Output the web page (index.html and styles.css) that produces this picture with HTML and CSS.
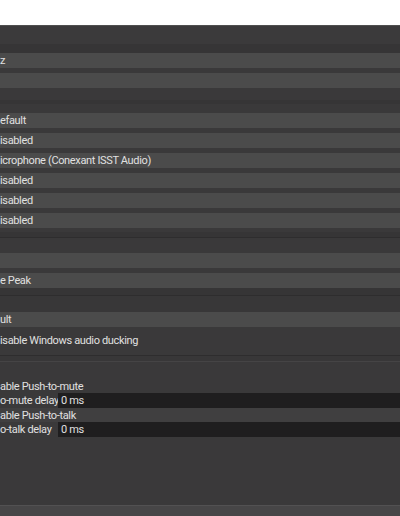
FILE: index.html
```html
<!DOCTYPE html>
<html>
<head>
<meta charset="utf-8">
<link rel="stylesheet" href="styles.css">
</head>
<body>
<div class="top"></div>
<div class="dialog">
  <div class="sp h18 bgA"></div>
  <div class="sp h9 bgB"></div>
  <div class="combo">z</div>
  <div class="sp h5"></div>
  <div class="combo"></div>
  <div class="sp h12"></div>
  <div class="sp h4 bgB"></div>
  <div class="sp h9"></div>
  <div class="combo">efault</div>
  <div class="sp h5"></div>
  <div class="combo">isabled</div>
  <div class="sp h5"></div>
  <div class="combo">icrophone (Conexant ISST Audio)</div>
  <div class="sp h5"></div>
  <div class="combo">isabled</div>
  <div class="sp h5"></div>
  <div class="combo">isabled</div>
  <div class="sp h5"></div>
  <div class="combo">isabled</div>
  <div class="sp h4"></div>
  <div class="sp h5 bgB"></div>
  <div class="line dark"></div>
  <div class="sp h15"></div>
  <div class="combo"></div>
  <div class="sp h5"></div>
  <div class="combo">e Peak</div>
  <div class="sp h7 bgB"></div>
  <div class="line dark"></div>
  <div class="sp h16 bgC"></div>
  <div class="combo">ult</div>
  <div class="sp h6"></div>
  <div class="row">isable Windows audio ducking</div>
  <div class="sp h8"></div>
  <div class="line dark"></div>
  <div class="sp h5 bgC"></div>
  <div class="line light"></div>
  <div class="sp h17"></div>
  <div class="row">able Push-to-mute</div>
  <div class="field"><span class="lbl">o-mute delay</span><span class="input">0 ms</span></div>
  <div class="row hl">able Push-to-talk</div>
  <div class="field"><span class="lbl">o-talk delay</span><span class="input">0 ms</span></div>
  <div class="fill"></div>
  <div class="bottom"></div>
</div>
</body>
</html>
```
FILE: styles.css
```css
html, body {
  margin: 0;
  padding: 0;
  background: #ffffff;
}
body {
  width: 400px;
  height: 516px;
  overflow: hidden;
  font-family: Roboto, "Open Sans", sans-serif;
  font-size: 11px;
  letter-spacing: -0.35px;
  color: #e0e0e0;
}
.top {
  height: 25px;
  background: #ffffff;
}
.dialog {
  height: 491px;
  background: #3a393a;
  border-top: 1px solid #4f4f4f;
  box-sizing: border-box;
  display: flex;
  flex-direction: column;
}
.sp { flex: none; }
.h4 { height: 4px; }
.h5 { height: 5px; }
.h6 { height: 6px; }
.h7 { height: 7px; }
.h8 { height: 8px; }
.h9 { height: 9px; }
.h12 { height: 12px; }
.h15 { height: 15px; }
.h16 { height: 16px; }
.h17 { height: 17px; }
.h18 { height: 18px; }
.bgA { background: #3b3a3b; }
.bgB { background: #363536; }
.bgC { background: #383738; }
.line { flex: none; height: 1px; }
.line.dark { background: #2e2d2e; }
.line.light { background: #454445; }
.combo {
  flex: none;
  height: 15px;
  line-height: 15px;
  background: #4b4b4b;
  white-space: nowrap;
  overflow: hidden;
}
.row {
  flex: none;
  height: 14px;
  line-height: 15px;
  white-space: nowrap;
}
.row.hl { background: #403f40; }
.field {
  flex: none;
  height: 15px;
  line-height: 15px;
  display: flex;
  white-space: nowrap;
}
.lbl {
  width: 58px;
  flex: none;
}
.input {
  flex: 1;
  background: #1f1e1f;
  padding-left: 3px;
}
.fill {
  flex: 1;
}
.bottom {
  flex: none;
  height: 11px;
  background: #474647;
  border-top: 1px solid #525152;
  box-sizing: border-box;
}
```
